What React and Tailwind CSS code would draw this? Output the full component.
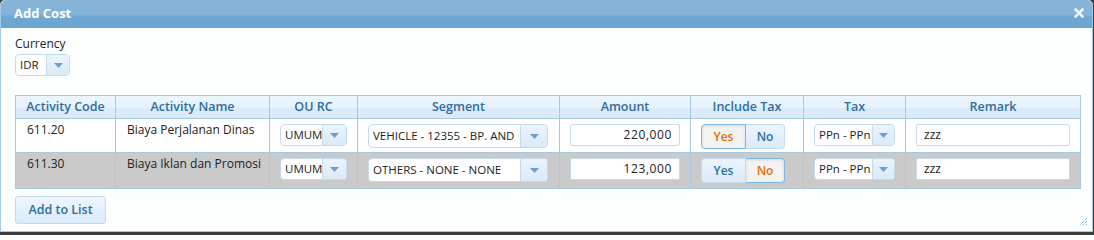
import React from 'react';

const font = { fontFamily: '"Open Sans", "DejaVu Sans", sans-serif' };

const Arrow = () => (
  <svg width="9" height="5" viewBox="0 0 9 5"><path d="M0 0h9L4.5 5z" fill="#6d9fcb" /></svg>
);

const Select = ({ value, w, split, h = 22 }) => (
  <div
    className="flex rounded-[4px] border border-[#c5dbec] bg-white overflow-hidden"
    style={{ width: w, height: h }}
  >
    <div className="flex-1 flex items-center pl-[4px] text-[11.5px] text-[#222] whitespace-nowrap overflow-hidden">{value}</div>
    <div
      className="flex items-center justify-center border-l border-[#c5dbec] bg-[linear-gradient(#eaf4fd,#d9eaf9)]"
      style={{ width: split }}
    >
      <Arrow />
    </div>
  </div>
);

const Input = ({ value, w, right }) => (
  <div
    className={`h-[22px] rounded-[2px] border border-[#c5dbec] bg-white flex items-center px-[7px] text-[12px] text-[#222] ${right ? 'justify-end tracking-[0.6px]' : ''}`}
    style={{ width: w }}
  >
    {value}
  </div>
);

const Toggle = ({ yes }) => {
  const on = 'bg-[#f3f3f3] text-[#e17009] border-[#79b7e7] shadow-[inset_0_1px_3px_rgba(0,0,0,0.12)]';
  const off = 'bg-[linear-gradient(#eaf4fd,#dcebf9)] text-[#2e6e9e] border-[#c5dbec]';
  return (
    <div className="flex w-[84px] h-[25px] text-[12px] font-semibold">
      <div className={`w-[45px] flex items-center justify-center border rounded-l-[4px] ${yes ? on : off}`}>Yes</div>
      <div className={`flex-1 flex items-center justify-center border border-l-0 rounded-r-[4px] ${yes ? off : on}`}>No</div>
    </div>
  );
};

const rows = [
  { code: '611.20', name: 'Biaya Perjalanan Dinas', seg: 'VEHICLE - 12355 - BP. AND', amt: '220,000', yes: true, bg: 'bg-white', h: 'h-[34px]' },
  { code: '611.30', name: 'Biaya Iklan dan Promosi', seg: 'OTHERS - NONE - NONE', amt: '123,000', yes: false, bg: 'bg-[#cacaca]', h: 'h-[36px]' },
];

const heads = [
  ['Activity Code', 100], ['Activity Name', 154], ['OU RC', 88], ['Segment', 202],
  ['Amount', 131], ['Include Tax', 113], ['Tax', 102], ['Remark', 175],
];

export default function App() {
  return (
    <div className="w-[1094px] h-[235px] bg-[#3c3c3c] overflow-hidden" style={font}>
      <div className="w-[1093px] h-[232px] bg-[#fdfefe] border border-[#a6c9e2] border-t-0 rounded-t-[5px] flex flex-col relative">
        {/* title bar */}
        <div className="h-[28px] rounded-t-[5px] bg-[linear-gradient(#87b5d9_0%,#84b3d8_52%,#6ea7d3_60%,#6aa4d1_100%)] flex items-center justify-between pl-[13px] pr-[8px]">
          <span className="text-white font-bold text-[13px]">Add Cost</span>
          <svg width="10" height="10" viewBox="0 0 10 10" className="mb-[2px]">
            <path d="M1.5 1.5l7 7M8.5 1.5l-7 7" stroke="#eef3f9" strokeWidth="2.6" strokeLinecap="square" />
          </svg>
        </div>

        <div className="pl-[14px] pt-[7px]">
          <div className="text-[12px] text-[#222] leading-[17px]">Currency</div>
          <div className="mt-[2px]">
            <Select value="IDR" w={55} split={23} />
          </div>

          <table className="mt-[19px] border-collapse text-[12px] table-fixed w-[1065px]">
            <colgroup>
              {heads.map(([h, w]) => <col key={h} style={{ width: w }} />)}
            </colgroup>
            <thead>
              <tr className="h-[23px] bg-[linear-gradient(#edf6fe_0%,#e6f1fc_50%,#dbeaf9_55%,#dcebf9_100%)]">
                {heads.map(([h]) => (
                  <th key={h} className="border border-[#a6c9e2] text-[#2e6e9e] font-semibold text-[12.5px] text-center p-0">{h}</th>
                ))}
              </tr>
            </thead>
            <tbody>
              {rows.map((r) => (
                <tr key={r.code} className={`${r.bg} ${r.h}`}>
                  <td className="border border-[#a6c9e2] align-top pl-[11px] pt-[2px] text-[#222] whitespace-nowrap">{r.code}</td>
                  <td className="border border-[#a6c9e2] align-top pl-[11px] pt-[2px] text-[#222] whitespace-nowrap">{r.name}</td>
                  <td className="border border-[#a6c9e2] align-top pl-[10px] pt-[5px]">
                    <Select value="UMUM" w={67} split={24} />
                  </td>
                  <td className="border border-[#a6c9e2] align-top pl-[10px] pt-[5px]">
                    <Select value={r.seg} w={180} split={27} h={24} />
                  </td>
                  <td className="border border-[#a6c9e2] align-top pl-[10px] pt-[5px]">
                    <Input value={r.amt} w={110} right />
                  </td>
                  <td className="border border-[#a6c9e2] align-top pl-[10px] pt-[5px]">
                    <Toggle yes={r.yes} />
                  </td>
                  <td className="border border-[#a6c9e2] align-top pl-[10px] pt-[5px]">
                    <Select value="PPn - PPn" w={81} split={22} />
                  </td>
                  <td className="border border-[#a6c9e2] align-top pl-[10px] pt-[5px]">
                    <Input value="zzz" w={154} />
                  </td>
                </tr>
              ))}
            </tbody>
          </table>

          <button className="mt-[7px] w-[91px] h-[28px] rounded-[3px] border border-[#c5dbec] bg-[linear-gradient(#eef6fe,#d9eaf9)] text-[#2e6e9e] font-semibold text-[12.5px]">
            Add to List
          </button>
        </div>

        {/* resize grip */}
        <svg width="9" height="9" viewBox="0 0 9 9" className="absolute right-[4px] bottom-[5px]">
          <path d="M8 1L1 8M8 4L4 8M8 7L7 8" stroke="#3d8fd6" strokeWidth="1" strokeDasharray="1 1" />
        </svg>
      </div>
    </div>
  );
}
